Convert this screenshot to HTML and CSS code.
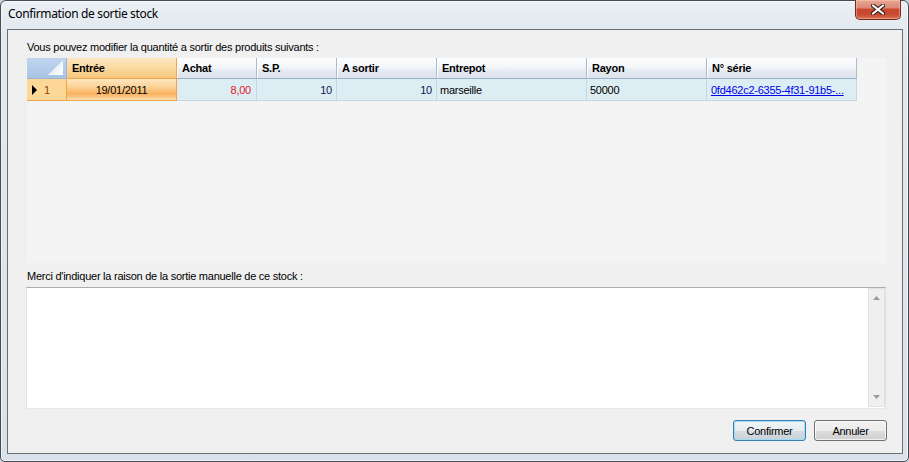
FILE: index.html
```html
<!DOCTYPE html>
<html lang="fr">
<head>
<meta charset="utf-8">
<title>Confirmation de sortie stock</title>
<link rel="stylesheet" href="styles.css">
</head>
<body>
<div class="window">
  <div class="titlebar">
    <span class="title">Confirmation de sortie stock</span>
    <div class="close">
      <svg width="14" height="11" viewBox="0 0 14 11">
        <path d="M2 1.5 L12 9.5 M12 1.5 L2 9.5" stroke="#3a2520" stroke-width="4.2" stroke-linecap="round"/>
        <path d="M2 1.5 L12 9.5 M12 1.5 L2 9.5" stroke="#ffffff" stroke-width="2.2" stroke-linecap="round"/>
      </svg>
    </div>
  </div>
  <div class="client">
    <div class="label first">Vous pouvez modifier la quantité a sortir des produits suivants :</div>
    <div class="gridbox">
      <div class="dg">
        <div class="cell corner">
          <svg width="15" height="15" viewBox="0 0 15 15"><defs><linearGradient id="tg" x1="0" y1="0" x2="1" y2="1"><stop offset="0" stop-color="#d6e2f0"/><stop offset="1" stop-color="#ffffff"/></linearGradient></defs><path d="M0 15 L15 0 L15 15 Z" fill="url(#tg)"/></svg>
        </div>
        <div class="cell hd hsel">Entrée</div>
        <div class="cell hd">Achat</div>
        <div class="cell hd">S.P.</div>
        <div class="cell hd">A sortir</div>
        <div class="cell hd">Entrepot</div>
        <div class="cell hd">Rayon</div>
        <div class="cell hd">N° série</div>

        <div class="cell rh">
          <svg class="arrow" width="5" height="10" viewBox="0 0 5 10"><path d="M0 0 L5 5 L0 10 Z" fill="#000"/></svg>
          <span class="rownum">1</span>
        </div>
        <div class="cell cur">19/01/2011</div>
        <div class="cell td num red">8,00</div>
        <div class="cell td num navy">10</div>
        <div class="cell td num navy">10</div>
        <div class="cell td">marseille</div>
        <div class="cell td">50000</div>
        <div class="cell td link"><span>0fd462c2-6355-4f31-91b5-...</span></div>
      </div>
    </div>
    <div class="label second">Merci d'indiquer la raison de la sortie manuelle de ce stock :</div>
    <div class="textbox">
      <div class="vscroll">
        <svg width="7" height="4" viewBox="0 0 7 4"><path d="M0 4 L3.5 0 L7 4 Z" fill="#9a9a9a"/></svg>
        <svg width="7" height="4" viewBox="0 0 7 4"><path d="M0 0 L3.5 4 L7 0 Z" fill="#9a9a9a"/></svg>
      </div>
    </div>
    <div class="buttons">
      <button class="btn default">Confirmer</button>
      <button class="btn">Annuler</button>
    </div>
  </div>
</div>
</body>
</html>
```

FILE: styles.css
```css
html, body {
  margin: 0;
  padding: 0;
}
body {
  width: 909px;
  height: 462px;
  overflow: hidden;
  background: #c9d3dc;
  font-family: "Liberation Sans", Arial, sans-serif;
  font-size: 11px;
  color: #000;
}
.window {
  box-sizing: border-box;
  width: 909px;
  height: 462px;
  border: 1px solid #474c52;
  border-radius: 6px 6px 5px 5px;
  background: linear-gradient(to bottom, #eaf0f5 0, #e2e9ef 28px, #dde5ec 60%, #d9e2ea 100%);
  box-shadow: inset 0 0 0 1px rgba(255,255,255,0.55);
  padding: 0 5px 7px 6px;
  display: flex;
  flex-direction: column;
}
.titlebar {
  height: 28px;
  display: flex;
  align-items: flex-start;
}
.title {
  flex: 1;
  font-family: "Noto Sans", "Open Sans", sans-serif;
  font-size: 12px;
  letter-spacing: -0.35px;
  line-height: 16px;
  padding: 5px 0 0 1px;
  color: #000;
}
.close {
  width: 46px;
  height: 20px;
  margin: -1px 2px 0 0;
  box-sizing: border-box;
  border: 1px solid #6e2a1f;
  border-top: none;
  border-radius: 0 0 5px 5px;
  background: linear-gradient(to bottom, #e7a796 0, #dc8a76 40%, #c8472f 50%, #c84a30 75%, #d97050 100%);
  box-shadow: inset 0 0 0 1px rgba(255,210,190,0.45);
  display: flex;
  align-items: center;
  justify-content: center;
}
.close svg {
  margin-top: -1px;
}
.client {
  flex: 1;
  border: 1px solid #6b6f73;
  background: #f0f0f0;
  padding: 11px 16px 12px 18px;
  display: flex;
  flex-direction: column;
  letter-spacing: -0.25px;
}
.label {
  line-height: 13px;
  height: 13px;
  margin-left: 1px;
  white-space: nowrap;
}
.label.first {
  margin-bottom: 4px;
}
.label.second {
  margin-top: 7px;
  margin-bottom: 4px;
}
.gridbox {
  margin-left: 1px;
  width: 859px;
  height: 205px;
  background: #f4f4f4;
}
.dg {
  display: grid;
  grid-template-columns: 40px 110px 80px 80px 100px 150px 120px 150px;
  grid-template-rows: 21px 22px;
  width: 830px;
}
.cell {
  box-sizing: border-box;
  display: flex;
  align-items: center;
  white-space: nowrap;
  overflow: hidden;
  padding: 0 3px;
}
.corner {
  background: linear-gradient(to bottom, #c0d5ee, #a8c4e6);
  border-right: 1px solid #9fb5cf;
  border-bottom: 1px solid #9fb5cf;
  justify-content: flex-end;
  align-items: flex-end;
  padding: 0 3px 3px 0;
}
.hd {
  background: linear-gradient(to bottom, #fdfdfe 0, #f4f6f9 45%, #e7ebf2 60%, #dde3ec 100%);
  border-right: 1px solid #a9bcd3;
  border-bottom: 1px solid #9cb2cc;
  box-shadow: inset 1px 0 0 #ffffff;
  font-weight: bold;
  padding-left: 5px;
}
.hsel {
  background: linear-gradient(to bottom, #fde7c0 0, #fbd9a0 50%, #f8c67c 100%);
  border-right: 1px solid #f0a54a;
  border-bottom: 1px solid #f0a54a;
  box-shadow: none;
}
.rh {
  background: #fdd796;
  border-right: 1px solid #f2a249;
  border-bottom: 1px solid #f2a249;
  padding-left: 5px;
}
.arrow {
  margin-right: 7px;
}
.rownum {
  color: #7a4a10;
}
.cur {
  background: linear-gradient(to bottom, #fee6c0 0, #fcd49a 35%, #f8b25e 70%, #fac583 85%, #fde0b4 100%);
  border-right: 1px solid #f2a249;
  border-bottom: 1px solid #f2a249;
  justify-content: center;
}
.td {
  background: #dcedf4;
  border-right: 1px solid #c4d7e3;
  border-bottom: 1px solid #c4d7e3;
}
.num {
  justify-content: flex-end;
  padding-right: 4px;
}
.red {
  color: #e2182c;
  padding-right: 5px;
}
.navy {
  color: #141450;
}
.link {
  padding-left: 4px;
}
.link span {
  color: #0000ee;
  text-decoration: underline;
}
.textbox {
  box-sizing: border-box;
  width: 860px;
  height: 122px;
  background: #ffffff;
  border: 1px solid;
  border-color: #abadb3 #dbdfe6 #e3e9ef #e2e3ea;
  display: flex;
  justify-content: flex-end;
}
.vscroll {
  box-sizing: border-box;
  width: 17px;
  height: 119px;
  background: #efefef;
  border: 1px solid #e2e2e2;
  display: flex;
  flex-direction: column;
  align-items: center;
  justify-content: space-between;
  padding: 7px 0 7px;
}
.buttons {
  margin-top: 11px;
  margin-right: -1px;
  display: flex;
  justify-content: flex-end;
  gap: 8px;
}
.btn {
  box-sizing: border-box;
  width: 73px;
  height: 21px;
  margin: 0;
  padding: 0;
  font-family: "Liberation Sans", Arial, sans-serif;
  font-size: 11px;
  letter-spacing: -0.25px;
  color: #000;
  border: 1px solid #707070;
  border-radius: 3px;
  background: linear-gradient(to bottom, #f2f2f2 0, #ebebeb 50%, #dddddd 51%, #cfcfcf 100%);
  box-shadow: inset 0 0 0 1px rgba(255,255,255,0.7);
}
.btn.default {
  border-color: #3c7fb1;
  box-shadow: inset 0 0 0 1px #9fdcf7;
  background: linear-gradient(to bottom, #f0f4f6 0, #e6ecf0 50%, #d6dde2 51%, #c9d2d8 100%);
}
```
